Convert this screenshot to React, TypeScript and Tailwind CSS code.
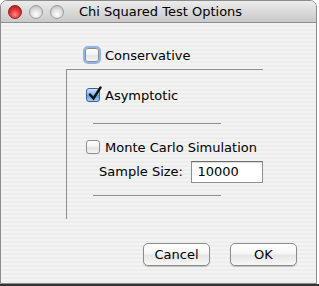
import React from "react"

const font = { fontFamily: '"Lucida Grande", "DejaVu Sans", sans-serif' }

function Light({ red }: { red?: boolean }) {
  return (
    <div
      className={`w-[14px] h-[14px] rounded-full border ${
        red
          ? "border-[#8a2222] bg-[radial-gradient(circle_at_50%_70%,#ff8a8a_0%,#e23a3a_45%,#a81212_100%)]"
          : "border-[#9a9a9a] bg-[radial-gradient(circle_at_50%_70%,#ffffff_0%,#dedede_50%,#b4b4b4_100%)]"
      }`}
    />
  )
}

function Check({ checked, focus }: { checked?: boolean; focus?: boolean }) {
  return (
    <div
      className={`relative w-[14px] h-[14px] rounded-[3px] border shrink-0 ${
        checked
          ? "border-[#3d5f9a] bg-[linear-gradient(to_bottom,#cfe4fb_0%,#7fb3ee_50%,#5a9be6_55%,#a8d0fa_100%)]"
          : "border-[#8d8d8d] bg-[linear-gradient(to_bottom,#ffffff_0%,#f2f2f2_50%,#e3e3e3_55%,#f5f5f5_100%)]"
      } ${focus ? "shadow-[0_0_0_2px_#8fb5e3]" : ""}`}
    >
      {checked && (
        <svg className="absolute left-[1px] top-[-3px]" width="14" height="15" viewBox="0 0 14 15">
          <path d="M2 8.5 L5.5 12.5 L12.5 1.5" fill="none" stroke="#111" strokeWidth="2.4" strokeLinecap="round" />
        </svg>
      )}
    </div>
  )
}

function Button({ label }: { label: string }) {
  return (
    <div className="w-[67px] h-[23px] rounded-[5px] border border-[#8b8b8b] bg-[linear-gradient(to_bottom,#ffffff_0%,#f6f6f6_45%,#e6e6e6_55%,#f8f8f8_100%)] shadow-[0_1px_1px_rgba(0,0,0,0.2)] flex items-center justify-center text-[13px] text-black">
      {label}
    </div>
  )
}

export default function App() {
  return (
    <div className="w-[319px] h-[286px] bg-white relative overflow-hidden" style={font}>
      <div className="w-[317px] h-[284px] rounded-t-[7px] border border-[#8c8c8c] overflow-hidden flex flex-col bg-[repeating-linear-gradient(to_bottom,#ededed_0px,#ededed_2px,#f3f3f3_2px,#f3f3f3_4px)]">
        {/* title bar */}
        <div className="h-[22px] shrink-0 flex items-center pl-[7px] border-b border-[#8e8e8e] bg-[linear-gradient(to_bottom,#ececec_0%,#dadada_50%,#c9c9c9_100%)]">
          <div className="flex gap-[7px]">
            <Light red />
            <Light />
            <Light />
          </div>
          <div className="ml-[15px] text-[13px] text-black">Chi Squared Test Options</div>
        </div>

        {/* body */}
        <div className="flex items-center gap-[6px] pl-[84px] mt-[25px] h-[14px] text-[13px] text-black">
          <Check focus />
          <span className="pt-[1px]">Conservative</span>
        </div>

        <div className="ml-[65px] mt-[7px] w-[197px] h-[150px] border-t border-l border-[#8e8e8e] flex flex-col">
          <div className="flex items-center gap-[5px] pl-[19px] mt-[18px] h-[14px] text-[13px] text-black">
            <Check checked />
            <span className="pt-[1px]">Asymptotic</span>
          </div>
          <div className="ml-[26px] mt-[21px] w-[128px] h-px bg-[#8e8e8e]" />
          <div className="flex items-center gap-[5px] pl-[19px] mt-[16px] h-[14px] text-[13px] text-black">
            <Check />
            <span className="pt-[1px]">Monte Carlo Simulation</span>
          </div>
          <div className="flex items-center pl-[32px] mt-[6px] h-[23px] text-[13px] text-black">
            <span className="w-[93px]">Sample Size:</span>
            <div className="w-[72px] h-[22px] border border-[#8e8e8e] border-t-[#6e6e6e] bg-white flex items-center pl-[5px] shadow-[inset_0_1px_1px_rgba(0,0,0,0.15)]">
              10000
            </div>
          </div>
          <div className="ml-[26px] mt-[12px] w-[128px] h-px bg-[#8e8e8e]" />
        </div>

        <div className="flex justify-end gap-[20px] pr-[19px] mt-[24px]">
          <Button label="Cancel" />
          <Button label="OK" />
        </div>
      </div>
      <div className="absolute left-0 bottom-0 w-[319px] h-[2px] bg-[#333]" />
    </div>
  )
}
